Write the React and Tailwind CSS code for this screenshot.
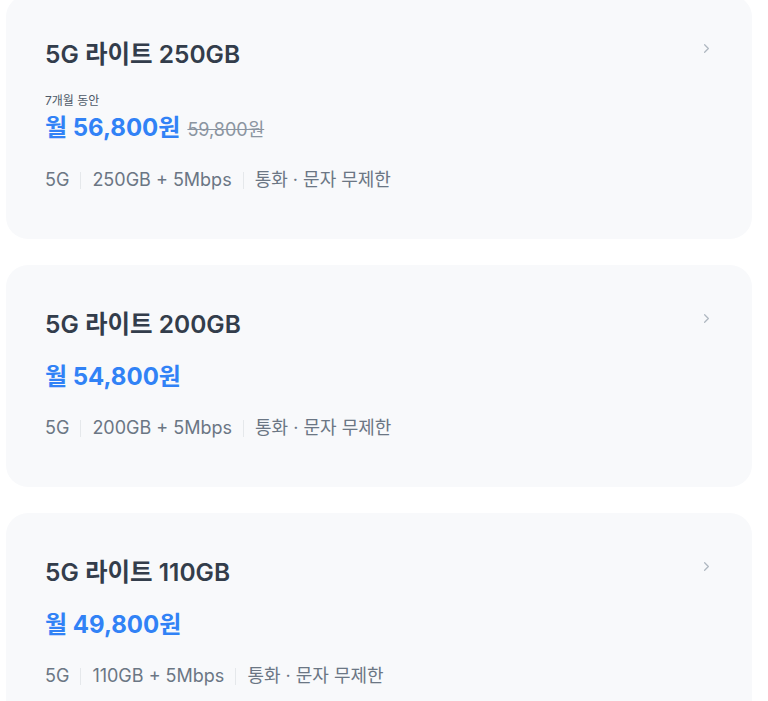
import { ChevronRight } from 'lucide-react'

const plans = [
  { name: '5G 라이트 250GB', price: '56,800', promo: '7개월 동안', original: '59,800원', data: '250GB + 5Mbps' },
  { name: '5G 라이트 200GB', price: '54,800', data: '200GB + 5Mbps' },
  { name: '5G 라이트 110GB', price: '49,800', data: '110GB + 5Mbps' },
]

function PlanCard({ plan }) {
  return (
    <div className="flex items-start justify-between rounded-[22px] bg-[#f8f9fb] pl-[39px] pr-[38px] pt-[43px] pb-[47px]">
      <div className="flex flex-col">
        <h2 className="text-[24.5px] leading-[32px] font-semibold text-[#333d4b]">{plan.name}</h2>

        {plan.promo ? (
          <>
            <p className="mt-[23px] text-[12px] leading-[16px] text-[#4e5968]">{plan.promo}</p>
            <div className="mt-[3px] flex items-baseline gap-[7px]">
              <span className="text-[24px] leading-[32px] font-bold text-[#3182f6]">월 {plan.price}원</span>
              <span className="text-[18px] text-[#8b95a1] line-through">{plan.original}</span>
            </div>
          </>
        ) : (
          <div className="mt-[21px] text-[24px] leading-[32px] font-bold text-[#3182f6]">월 {plan.price}원</div>
        )}

        {/* spec line */}
        <div className={`${plan.promo ? 'mt-[24px]' : 'mt-[23px]'} flex items-center text-[18px] leading-[24px] text-[#6b7684]`}>
          <span>5G</span>
          <span className="mx-[11px] h-[17px] w-px bg-[#e5e8eb]" />
          <span>{plan.data}</span>
          <span className="mx-[11px] h-[17px] w-px bg-[#e5e8eb]" />
          <span>통화 · 문자 무제한</span>
        </div>
      </div>
      <ChevronRight size={15} strokeWidth={2} className="mt-[3px] text-[#b0b8c1]" />
    </div>
  )
}

export default function App() {
  return (
    <div
      className="min-h-screen w-[768px] overflow-hidden bg-white pl-[6px] pr-[16px]"
      style={{ fontFamily: 'Inter, "Noto Sans CJK KR", sans-serif' }}
    >
      <div className="-mt-[5px] flex flex-col gap-[26px]">
        {plans.map(p => <PlanCard key={p.name} plan={p} />)}
      </div>
    </div>
  )
}
